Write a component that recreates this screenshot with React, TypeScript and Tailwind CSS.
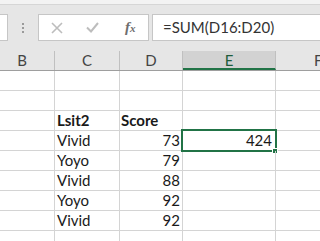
const rows: { c: string; d: string; bold?: boolean; e?: string }[] = [
  { c: '', d: '' },
  { c: '', d: '' },
  { c: 'Lsit2', d: 'Score', bold: true },
  { c: 'Vivid', d: '73', e: '424' },
  { c: 'Yoyo', d: '79' },
  { c: 'Vivid', d: '88' },
  { c: 'Yoyo', d: '92' },
  { c: 'Vivid', d: '92' },
  { c: '', d: '' },
];

const font = { fontFamily: 'Lato, "Open Sans", sans-serif' };

export default function App() {
  return (
    <div className="w-[320px] h-[241px] overflow-hidden bg-white text-[15px] text-[#1a1a1a]" style={font}>
      {/* top strip */}
      <div className="h-[5px] bg-[#f3f3f3] border-b border-[#d6d6d6]" />

      {/* formula bar */}
      <div className="h-[46px] bg-[#e6e6e6] flex items-start pt-[9px]">
        <div className="w-[8px] h-[27px] bg-white border border-l-0 border-[#c6c6c6] shrink-0" />
        <div className="w-[30px] h-[27px] flex flex-col items-center justify-center gap-[2px] shrink-0">
          <span className="w-[2px] h-[2px] bg-[#9a9a9a]" />
          <span className="w-[2px] h-[2px] bg-[#9a9a9a]" />
          <span className="w-[2px] h-[2px] bg-[#9a9a9a]" />
        </div>
        <div className="w-[111px] h-[27px] bg-white border border-[#c6c6c6] flex items-center shrink-0">
          <svg className="ml-[12px]" width="12" height="12" viewBox="0 0 12 12">
            <path d="M1 1 L11 11 M11 1 L1 11" stroke="#bdbdbd" strokeWidth="1.6" />
          </svg>
          <svg className="ml-[23px]" width="13" height="11" viewBox="0 0 13 11">
            <path d="M1 5.5 L5 9.5 L12 1" stroke="#bdbdbd" strokeWidth="2" fill="none" />
          </svg>
          <span
            className="ml-[26px] text-[15px] italic font-bold text-[#6e6e6e] leading-none"
            style={{ fontFamily: '"Liberation Serif", serif' }}
          >
            f<span className="text-[11px]">x</span>
          </span>
        </div>
        <div className="ml-[3px] flex-1 h-[27px] bg-white border border-r-0 border-[#c6c6c6] flex items-center pl-[10px] text-[#333]">
          =SUM(D16:D20)
        </div>
      </div>

      {/* column headers */}
      <div className="flex h-[20px] bg-[#e6e6e6] border-b border-[#9e9e9e] text-[#444]">
        <div className="w-[55px] shrink-0 border-r border-[#c0c0c0] flex items-center justify-center pr-[10px]">B</div>
        <div className="w-[65px] shrink-0 border-r border-[#c0c0c0] flex items-center justify-center">C</div>
        <div className="w-[63px] shrink-0 border-r border-[#c0c0c0] flex items-center justify-center">D</div>
        <div className="w-[93px] shrink-0 border-r border-[#c0c0c0] bg-[#d2d2d2] border-b-2 border-b-[#217346] flex items-center justify-center text-[#1d5c3a] pt-[1px]">
          E
        </div>
        <div className="flex-1 flex items-center pl-[38px] text-[#444]">F</div>
      </div>

      {/* grid */}
      {rows.map((r, i) => (
        <div key={i} className="flex h-[20px] border-b border-[#d4d4d4] leading-[19px]">
          <div className="w-[55px] shrink-0 border-r border-[#d4d4d4]" />
          <div className={`w-[65px] shrink-0 border-r border-[#d4d4d4] pl-[2px] ${r.bold ? 'font-bold' : ''}`}>{r.c}</div>
          <div
            className={`w-[63px] shrink-0 border-r border-[#d4d4d4] ${r.bold ? 'font-bold pl-[1px]' : 'text-right pr-[2px]'}`}
          >
            {r.d}
          </div>
          <div className="w-[93px] shrink-0 border-r border-[#d4d4d4] relative text-right pr-[3px]">
            {r.e}
            {r.e && (
              <>
                <div className="absolute -left-[2px] -top-[2px] w-[96px] h-[23px] border-2 border-[#217346]" />
                <div className="absolute left-[89px] top-[17px] w-[6px] h-[6px] bg-[#217346] border border-white" />
              </>
            )}
          </div>
          <div className="flex-1" />
        </div>
      ))}
    </div>
  );
}
